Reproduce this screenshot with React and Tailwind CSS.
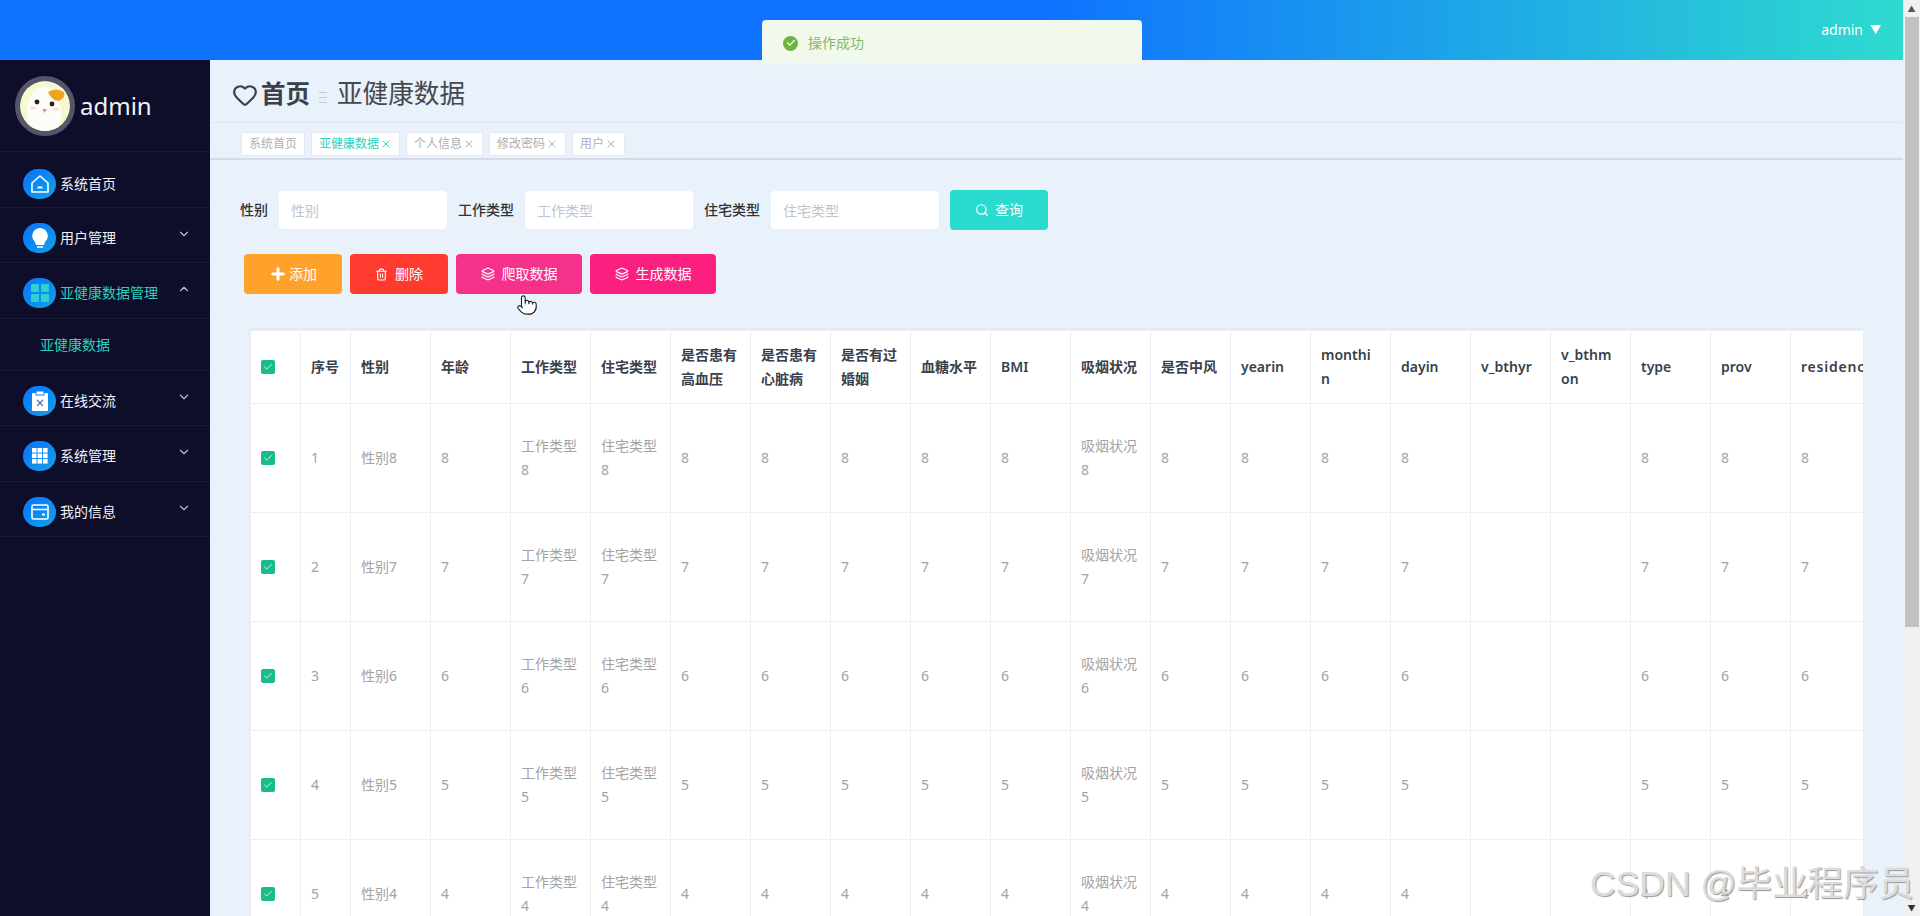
import { Check, ChevronDown, ChevronUp, Heart, Layers, Plus, Pointer, Search, Trash2, X } from "lucide-react"

const font = "font-['Noto_Sans','Noto_Sans_CJK_SC',sans-serif]"

const HomeIcon = () => (
  <svg width="20" height="20" viewBox="0 0 20 20" fill="none" stroke="white" strokeWidth="1.6">
    <path d="M10 2 L18 9 V18 H2 V9 Z" strokeLinejoin="round" />
    <path d="M7.5 13.5 H12.5" strokeWidth="2" />
  </svg>
)
const BulbIcon = () => (
  <svg width="18" height="22" viewBox="0 0 18 22">
    <path d="M9 1a8 8 0 0 1 5 14l-1 3H5l-1-3A8 8 0 0 1 9 1z" fill="white" />
    <path d="M6 20h6" stroke="#cfe4ff" strokeWidth="2" />
  </svg>
)
const GridFourIcon = () => (
  <svg width="18" height="18" viewBox="0 0 18 18" fill="#2fd0d0">
    <rect x="0" y="0" width="8" height="8" rx="1" />
    <rect x="10" y="0" width="8" height="8" rx="1" />
    <rect x="0" y="10" width="8" height="8" rx="1" />
    <rect x="10" y="10" width="8" height="8" rx="1" />
  </svg>
)
const ClipboardIcon = () => (
  <svg width="16" height="20" viewBox="0 0 16 20">
    <rect x="0" y="2" width="16" height="18" rx="1" fill="white" />
    <rect x="4" y="0" width="8" height="4" fill="white" stroke="#1a7ef0" />
    <path d="M5 9l6 6M11 9l-6 6" stroke="#4b74b0" strokeWidth="1.2" />
  </svg>
)
const GridNineIcon = () => (
  <svg width="16" height="16" viewBox="0 0 16 16" fill="white">
    {[0, 5.5, 11].map((y) =>
      [0, 5.5, 11].map((x) => <rect key={`${x}-${y}`} x={x} y={y} width="4.6" height="4.6" />),
    )}
  </svg>
)
const CardIcon = () => (
  <svg width="18" height="16" viewBox="0 0 18 16" fill="none" stroke="white" strokeWidth="1.6">
    <rect x="1" y="1" width="16" height="14" rx="1.5" />
    <path d="M1 5.5h16" />
    <path d="M11 10.5h3" strokeWidth="2" />
  </svg>
)

const Avatar = () => (
  <div className="h-[60px] w-[60px] shrink-0 rounded-full border-[5px] border-[#55556a] overflow-hidden">
    <svg width="50" height="50" viewBox="0 0 50 50">
      <rect width="50" height="50" fill="#f6f8d2" />
      <ellipse cx="24" cy="32" rx="17" ry="26" fill="#fdfdf8" />
      <path d="M28 11 q8 -5 16 0 q2 6 -5 9 q-7 0 -11 -9z" fill="#eea321" />
      <circle cx="17" cy="21" r="2.4" fill="#222" />
      <circle cx="32" cy="23" r="2.4" fill="#222" />
      <path d="M22 28h5l-2.5 4z" fill="#ee8f9c" />
      <ellipse cx="13" cy="27" rx="3" ry="1.6" fill="#fbdce2" />
      <ellipse cx="36" cy="28" rx="3" ry="1.6" fill="#fbdce2" />
    </svg>
  </div>
)

const menu = [
  { label: "系统首页", icon: HomeIcon, first: true },
  { label: "用户管理", icon: BulbIcon, arrow: true },
  { label: "亚健康数据管理", icon: GridFourIcon, arrow: true, open: true },
  { label: "在线交流", icon: ClipboardIcon, arrow: true },
  { label: "系统管理", icon: GridNineIcon, arrow: true },
  { label: "我的信息", icon: CardIcon, arrow: true },
]

function Sidebar() {
  return (
    <aside className="w-[210px] shrink-0 bg-[#0e0e2a]">
      <div className="flex h-[92px] items-center gap-[5px] border-b border-[#1c1c3a] pl-[15px]">
        <Avatar />
        <span className="text-[24px] text-[#f2f2f7]">admin</span>
      </div>
      {menu.map((m) => (
        <div key={m.label}>
          <div className={`flex h-[55.5px] items-center border-b border-[#1c1c3a] pl-[23px] ${m.first ? "pt-[9px]" : "pt-[6px]"}`}>
            <span className="flex h-[30px] w-[33px] shrink-0 items-center justify-center rounded-full bg-linear-to-br from-[#0f72ff] to-[#1b9fe2]">
              <m.icon />
            </span>
            <span className={`ml-[4px] text-sm ${m.open ? "text-[#2bd2bd]" : "text-[#f2f2f7]"}`}>{m.label}</span>
            {m.arrow && (
              <span className="ml-auto mr-[19px] -translate-y-[4px] text-[#bcbccb]">
                {m.open ? <ChevronUp size={14} /> : <ChevronDown size={14} />}
              </span>
            )}
          </div>
          {m.open && (
            <div className="flex h-[52px] items-center border-b border-[#1c1c3a] pl-[40px] pt-[2px] text-sm text-[#2bd2bd]">亚健康数据</div>
          )}
        </div>
      ))}
    </aside>
  )
}

const tags = [
  { label: "系统首页" },
  { label: "亚健康数据", close: true, active: true },
  { label: "个人信息", close: true },
  { label: "修改密码", close: true },
  { label: "用户", close: true },
]

function Header() {
  return (
    <>
      <div className="flex h-[63px] items-center border-b border-[#dde6f2] pl-[22px] pt-[7px] text-[#3a3f4b]">
        <Heart size={26} strokeWidth={2} />
        <span className="ml-[3px] text-[24.5px] font-bold">首页</span>
        <svg className="ml-[9px] mr-[10px] mt-[6px]" width="8" height="13" viewBox="0 0 8 13" stroke="#c4cad3">
          <path d="M0 1.5h8M0 6.5h8M0 11.5h8" />
        </svg>
        <span className="text-[25.6px] text-[#45494f]">亚健康数据</span>
      </div>
      <div className="flex h-[37px] gap-[6px] border-b-2 border-[#d3dbe6] pl-[31px] pt-[9px]">
        {tags.map((t) => (
          <div
            key={t.label}
            className={`flex h-[24px] items-center border border-[#e6e9ee] bg-white px-[7px] text-xs ${t.active ? "text-[#2bd2bd]" : "text-[#aeb0b4]"}`}
          >
            {t.label}
            {t.close && <X size={12} className="ml-[1px]" />}
          </div>
        ))}
      </div>
    </>
  )
}

function SearchRow() {
  const fields = ["性别", "工作类型", "住宅类型"]
  return (
    <div className="mt-[30px] flex items-center gap-[11px] pl-[30px]">
      {fields.map((f) => (
        <div key={f} className="flex items-center gap-[11px]">
          <label className="text-sm font-medium text-[#333]">{f}</label>
          <input
            placeholder={f}
            className="h-[38px] w-[168px] rounded-[4px] bg-white px-[12px] text-sm outline-none placeholder:text-[#c0c4cc]"
          />
        </div>
      ))}
      <button className="flex h-[40px] w-[98px] items-center justify-center gap-[6px] rounded-[4px] bg-[#2cdbcf] text-sm text-white">
        <Search size={14} />
        查询
      </button>
    </div>
  )
}

function ActionRow() {
  return (
    <div className="relative mt-[24px] flex gap-[8px] pl-[34px]">
      <button className="flex h-[40px] w-[98px] items-center justify-center gap-[2px] rounded-[4px] bg-[#ffa22b] text-sm text-white">
        <Plus size={18} strokeWidth={4} />
        添加
      </button>
      <button className="flex h-[40px] w-[98px] items-center justify-center gap-[7px] rounded-[4px] bg-[#ff3b2f] text-sm text-white">
        <Trash2 size={13} />
        删除
      </button>
      <button className="flex h-[40px] w-[126px] items-center justify-center gap-[7px] rounded-[4px] bg-[#f5318b] text-sm text-white">
        <Layers size={14} />
        爬取数据
      </button>
      <button className="flex h-[40px] w-[126px] items-center justify-center gap-[7px] rounded-[4px] bg-[#fb2080] text-sm text-white">
        <Layers size={14} />
        生成数据
      </button>
      <Pointer size={22} fill="white" stroke="#222" strokeWidth={1.2} className="absolute left-[306px] top-[40px]" />
    </div>
  )
}

const columns = [
  "性别", "年龄", "工作类型", "住宅类型", "是否患有高血压", "是否患有心脏病", "是否有过婚姻", "血糖水平", "BMI",
  "吸烟状况", "是否中风", "yearin", "monthin", "dayin", "v_bthyr", "v_bthmon", "type", "prov",
]

const CheckBox = () => (
  <span className="flex h-[14px] w-[14px] items-center justify-center rounded-[2px] bg-[#19bd8d] text-white">
    <Check size={10} strokeWidth={2} />
  </span>
)

function rowCells(n) {
  return [`性别${n}`, n, `工作类型${n}`, `住宅类型${n}`, n, n, n, n, n, `吸烟状况${n}`, n, n, n, n, "", "", n, n]
}

function DataTable() {
  const th = "border border-[#ebeef5] pl-[10px] pr-[13px] text-left align-middle text-sm font-semibold leading-[24px] text-[#3a3f4b] break-all"
  const td = "border border-[#ebeef5] px-[10px] text-left align-middle text-sm leading-[24px] text-[#a3a3a3] break-all"
  return (
    <div className="ml-[40px] mr-[40px] mt-[36px] overflow-hidden shadow-[0_-1px_3px_rgba(0,0,0,0.06)]">
      <table className="w-[1700px] table-fixed border-collapse bg-white">
        <thead>
          <tr className="h-[73px]">
            <th className={`${th} w-[50px]`}><CheckBox /></th>
            <th className={`${th} w-[50px] whitespace-nowrap`}>序号</th>
            {columns.map((c) => (
              <th key={c} className={`${th} w-[80px]`}>{c}</th>
            ))}
            <th className={`${th} w-[160px] tracking-[0.8px]`}>residence</th>
          </tr>
        </thead>
        <tbody>
          {[8, 7, 6, 5, 4].map((n, i) => (
            <tr key={n} className="h-[109px]">
              <td className={td}><CheckBox /></td>
              <td className={td}>{i + 1}</td>
              {rowCells(n).map((v, j) => (
                <td key={j} className={td}>{v}</td>
              ))}
              <td className={td}>{n}</td>
            </tr>
          ))}
        </tbody>
      </table>
    </div>
  )
}

function ScrollBar() {
  return (
    <div className="flex h-full w-[17px] shrink-0 flex-col items-center bg-[#f1f1f1]">
      <div className="flex h-[17px] w-full items-center justify-center text-[8px] leading-none text-[#555]">▲</div>
      <div className="h-[610px] w-[14px] bg-[#c1c1c1]" />
      <div className="mt-auto flex h-[17px] w-full items-center justify-center text-[8px] leading-none text-[#333]">▼</div>
    </div>
  )
}

export default function App() {
  return (
    <div className={`relative flex h-[916px] w-[1920px] overflow-hidden bg-[#e9f1fb] ${font}`}>
      <div className="flex min-w-0 flex-1 flex-col">
        <header className="flex h-[60px] shrink-0 items-center justify-end bg-[linear-gradient(90deg,#0f72ff_55%,#2edbcf_100%)] pr-[22px] text-sm text-white">
          admin
          <span className="ml-[7px] text-[11px]">▼</span>
        </header>
        <div className="flex min-h-0 flex-1">
          <Sidebar />
          <main className="min-w-0 flex-1 overflow-hidden">
            <Header />
            <SearchRow />
            <ActionRow />
            <DataTable />
          </main>
        </div>
      </div>
      <ScrollBar />
      <div className="absolute left-[762px] top-[20px] flex h-[46px] w-[380px] items-center gap-[10px] rounded-[4px] bg-[linear-gradient(180deg,#f0f9eb_85%,#ecf4f4_100%)] pl-[21px] text-sm text-[#86b868]">
        <span className="flex h-[15px] w-[15px] items-center justify-center rounded-full bg-[#6cb53f] text-white">
          <Check size={10} strokeWidth={3} />
        </span>
        操作成功
      </div>
      <div className="absolute left-[1590px] top-[862px] font-['Liberation_Sans','Noto_Sans_CJK_SC',sans-serif] text-[35.5px] leading-[44px] whitespace-nowrap text-[#dcdcdc] [text-shadow:1px_1px_1px_#999]">
        CSDN @毕业程序员
      </div>
    </div>
  )
}
